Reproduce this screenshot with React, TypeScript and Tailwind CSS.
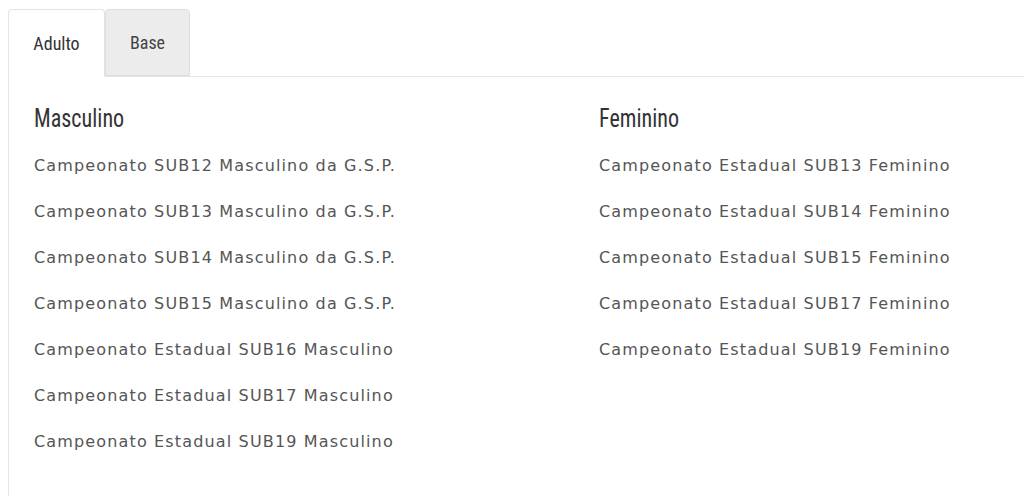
const masculino = [
  "Campeonato SUB12 Masculino da G.S.P.",
  "Campeonato SUB13 Masculino da G.S.P.",
  "Campeonato SUB14 Masculino da G.S.P.",
  "Campeonato SUB15 Masculino da G.S.P.",
  "Campeonato Estadual SUB16 Masculino",
  "Campeonato Estadual SUB17 Masculino",
  "Campeonato Estadual SUB19 Masculino",
];

const feminino = [
  "Campeonato Estadual SUB13 Feminino",
  "Campeonato Estadual SUB14 Feminino",
  "Campeonato Estadual SUB15 Feminino",
  "Campeonato Estadual SUB17 Feminino",
  "Campeonato Estadual SUB19 Feminino",
];

const condensed = "font-['Roboto_Condensed','Roboto',sans-serif]";

const Column = ({ title, items }: { title: string; items: string[] }) => (
  <div className="w-[565px] shrink-0">
    <h3 className="h-[32px] mb-[21px] leading-[32px]">
      {/* Oswald isn't available, so squeeze a taller Roboto Condensed */}
      <span className={`${condensed} inline-block origin-left scale-x-[0.85] text-[26px] text-[#333]`}>{title}</span>
    </h3>
    <ul>
      {items.map((item) => (
        <li
          key={item}
          className="h-[46px] leading-[22px] text-[16px] tracking-[1.15px] text-[#555] font-['DejaVu_Sans',sans-serif]"
        >
          {item}
        </li>
      ))}
    </ul>
  </div>
);

export default function App() {
  return (
    <div className="min-h-screen bg-white pl-2 pt-[9px] overflow-hidden">
      {/* Tabs */}
      <div className="flex relative z-10 -mb-px">
        <button className={`${condensed} w-[97px] h-[68px] bg-white border border-[#e4e4e4] border-b-white rounded-t-[4px] text-[18px] text-[#333]`}>
          Adulto
        </button>
        <button className={`${condensed} w-[85px] h-[67px] bg-[#ececec] border border-[#dedede] rounded-t-[4px] text-[18px] text-[#444]`}>
          Base
        </button>
      </div>

      {/* Panel */}
      <div className="w-[1200px] h-[440px] border border-[#e4e4e4] flex pl-[25px] pt-[25px]">
        <Column title="Masculino" items={masculino} />
        <Column title="Feminino" items={feminino} />
      </div>
    </div>
  );
}
